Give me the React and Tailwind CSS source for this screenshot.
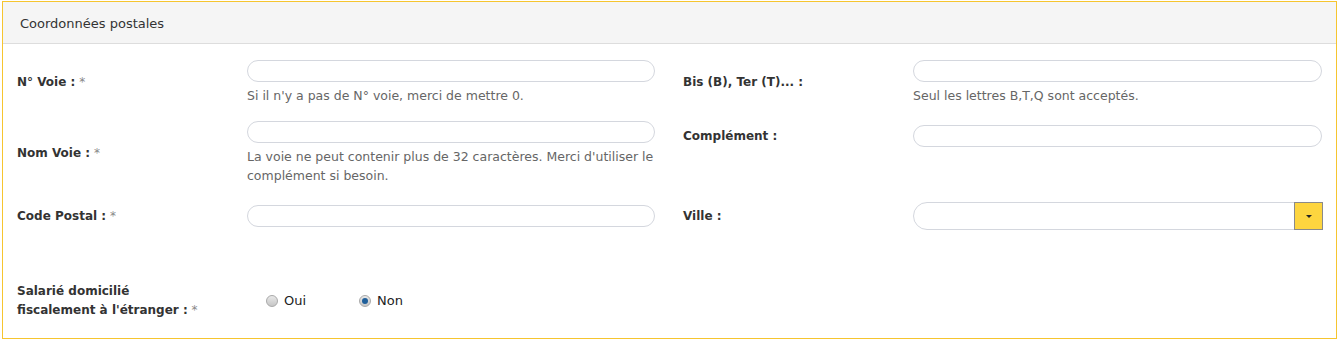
import React from 'react';

const sans = "font-['DejaVu_Sans',Verdana,sans-serif]";

function Label({ children, required, className = 'w-[244px] pl-[14px]' }) {
  return (
    <div className={`shrink-0 text-[12px] leading-[19px] font-bold text-[#333] ${sans} ${className}`}>
      {children}
      {required && <span className="font-normal text-[#888]"> *</span>}
    </div>
  );
}

function TextInput({ w = 'w-[409px]' }) {
  return <div className={`${w} h-[22px] rounded-full border border-[#d4d7de] bg-white`} />;
}

function Help({ children }) {
  return <div className={`mt-1 text-[12.5px] leading-[19px] text-[#666] ${sans}`}>{children}</div>;
}

function Radio({ checked, label }) {
  return (
    <label className="flex items-center gap-[6px]">
      <span className="w-[12px] h-[12px] rounded-full border border-[#a9a9a9] bg-gradient-to-b from-[#e8e8e8] to-[#c6c6c6] flex items-center justify-center">
        {checked && <span className="w-[6px] h-[6px] rounded-full bg-[#1f5f9a]" />}
      </span>
      <span className={`text-[13px] text-[#222] ${sans}`}>{label}</span>
    </label>
  );
}

export default function App() {
  return (
    <div className="bg-white w-[1339px] h-[340px] pt-[1px] px-[2px]">
      <div className="h-[338px] border border-[#f6c52f] flex flex-col">
        <div className={`h-[42px] bg-[#f5f5f5] border-b border-[#dddddd] flex items-center pl-[17px] pt-[3px] text-[13px] text-[#333] ${sans}`}>
          Coordonnées postales
        </div>

        <div className="flex flex-col pt-[16px]">
          {/* ligne 1 */}
          <div className="flex">
            <div className="flex items-center">
              <Label required>N° Voie :</Label>
              <div className="w-[408px]">
                <TextInput w="w-[408px]" />
                <Help>Si il n'y a pas de N° voie, merci de mettre 0.</Help>
              </div>
            </div>
            <div className="flex items-center ml-[28px]">
              <Label className="w-[230px]">Bis (B), Ter (T)... :</Label>
              <div className="w-[409px]">
                <TextInput />
                <Help>Seul les lettres B,T,Q sont acceptés.</Help>
              </div>
            </div>
          </div>

          {/* ligne 2 */}
          <div className="flex items-start mt-[16px]">
            <div className="flex items-center">
              <Label required>Nom Voie :</Label>
              <div className="w-[408px]">
                <TextInput w="w-[408px]" />
                <Help>La voie ne peut contenir plus de 32 caractères. Merci d'utiliser le complément si besoin.</Help>
              </div>
            </div>
            <div className="flex items-center ml-[28px] mt-[4px]">
              <Label className="w-[230px]">Complément :</Label>
              <TextInput />
            </div>
          </div>

          {/* ligne 3 */}
          <div className="flex items-center mt-[17px]">
            <div className="flex items-center">
              <Label required>Code Postal :</Label>
              <TextInput w="w-[408px]" />
            </div>
            <div className="flex items-center ml-[28px]">
              <Label className="w-[230px]">Ville :</Label>
              <div className="w-[410px] h-[28px] flex rounded-l-full border border-[#d4d7de] bg-white">
                <div className="flex-1" />
                <div className="w-[29px] -my-px -mr-px border border-[#8a8a8a] bg-[#fdd53f] flex items-center justify-center">
                  <span className="w-0 h-0 border-l-[3px] border-r-[3px] border-t-[3px] border-l-transparent border-r-transparent border-t-[#222]" />
                </div>
              </div>
            </div>
          </div>

          {/* ligne 4 */}
          <div className="flex items-center mt-[52px]">
            <Label required>
              Salarié domicilié
              <br />
              fiscalement à l'étranger :
            </Label>
            <div className="flex items-center gap-[53px] pl-[19px]">
              <Radio label="Oui" />
              <Radio checked label="Non" />
            </div>
          </div>
        </div>
      </div>
    </div>
  );
}
